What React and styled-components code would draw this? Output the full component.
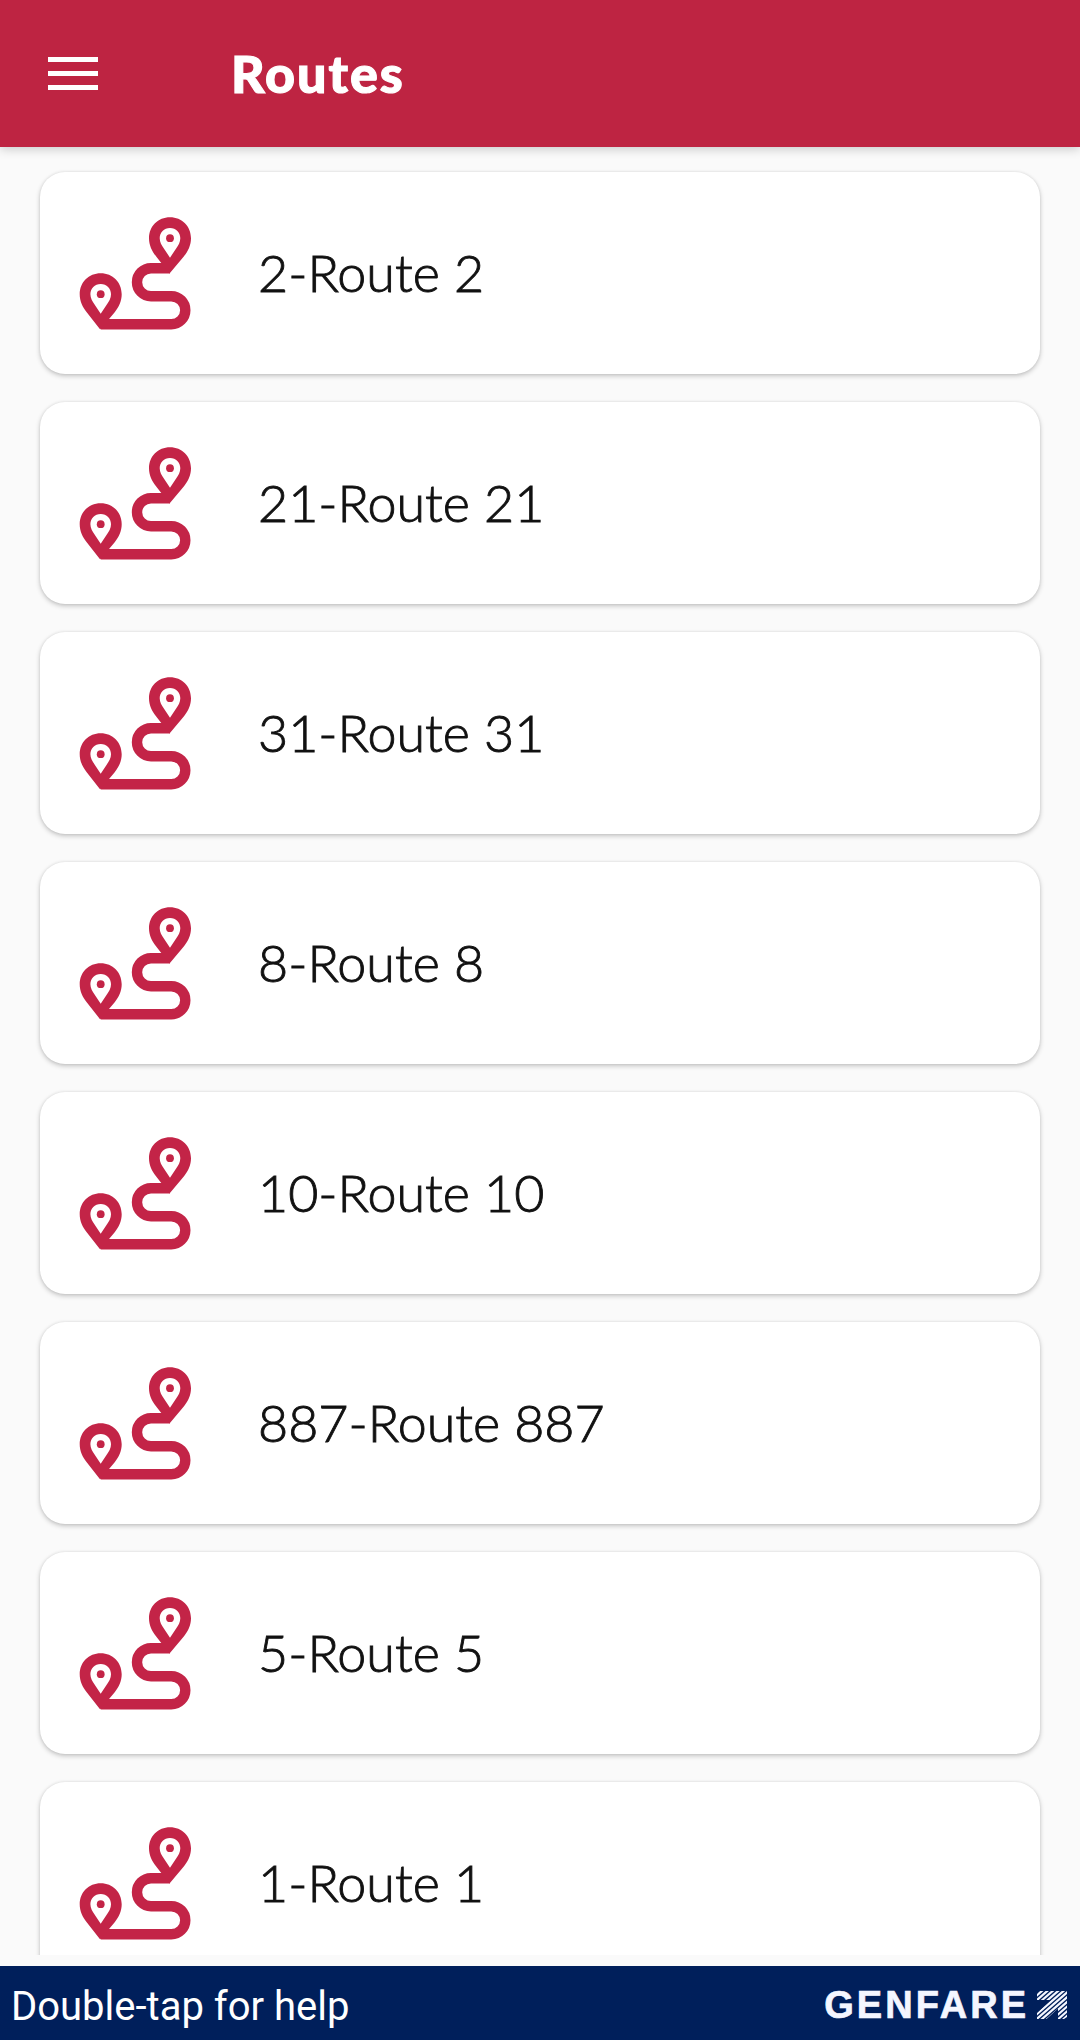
import React from "react";
import styled, { createGlobalStyle } from "styled-components";

const routes = [
    "2-Route 2",
    "21-Route 21",
    "31-Route 31",
    "8-Route 8",
    "10-Route 10",
    "887-Route 887",
    "5-Route 5",
    "1-Route 1",
];

function RouteIcon() {
    return (
        <RouteSvg viewBox="79 215 113 115" aria-hidden="true">
            <path
                d="M170 267.2H151a14 14 0 0 0 0 28H171.3a14 14 0 0 1 0 28H101"
                fill="none"
                stroke="currentColor"
                strokeWidth="10.4"
            />
            <Pin x={170} y={237.2} />
            <Pin x={100.7} y={293.2} />
        </RouteSvg>
    )
}

function Pin({ x, y }) {
    return (
        <g transform={`translate(${x} ${y})`}>
            <path
                d="M0 -21C-12 -21 -21 -12 -21 0C-21 7 -18 13 -14 18L-0.5 35.2L14 18C18 13 21 7 21 0C21 -12 12 -21 0 -21Z"
                fill="currentColor"
            />
            <path
                d="M0 -10.3C-6 -10.3 -10.3 -6 -10.3 0C-10.3 4 -8.3 7 -6.3 10L0 19.5L6.3 10C8.3 7 10.3 4 10.3 0C10.3 -6 6 -10.3 0 -10.3Z"
                fill="#fff"
            />
            <circle r="3.9" fill="currentColor" />
        </g>
    )
}

function BrandArrow() {
    return (
        <ArrowSvg viewBox="0 0 30 28" aria-hidden="true">
            <clipPath id="arrow-shape">
                <path d="M2 0H30V26L27 28H21V17.500L9.500 28H0V22L14 9H0V3Z" />
            </clipPath>
            <path
                clipPath="url(#arrow-shape)"
                d="M-2 6L6 -1M-2 10.700L11.400 -1M-2 15.400L16.800 -1M-2 20.100L22.200 -1M-2 24.800L27.600 -1M-2 29.500L32 -.2M2 30.700L32 4.500M7.400 30.700L32 9.200M12.800 30.700L32 13.900M18.200 30.700L32 18.600M23.600 30.700L32 23.300"
                fill="none"
                stroke="currentColor"
                strokeWidth="2.2"
            />
        </ArrowSvg>
    )
}

function App() {
    return (
        <Screen>
            <GlobalStyle />
            <Header>
                <MenuButton aria-label="Menu">
                    <MenuLine />
                    <MenuLine />
                    <MenuLine />
                </MenuButton>
                <Title>Routes</Title>
            </Header>
            <RouteList>
                {routes.map((route) => (
                    <RouteCard key={route}>
                        <RouteIcon />
                        <RouteName>{route}</RouteName>
                    </RouteCard>
                ))}
            </RouteList>
            <Footer>
                <HelpText>Double-tap for help</HelpText>
                <Brand>
                    <BrandName>GENFARE</BrandName>
                    <BrandArrow />
                </Brand>
            </Footer>
        </Screen>
    )
}

export default App;

const GlobalStyle = createGlobalStyle`
    * {
        box-sizing: border-box;
    }
    body {
        margin: 0;
        background: #fafafa;
    }
`

const Screen = styled.div`
    display: flex;
    flex-direction: column;
    width: 1080px;
    height: 2040px;
    overflow: hidden;
    background: #fafafa;
    font-family: Lato, sans-serif;
`

const Header = styled.header`
    display: flex;
    align-items: center;
    flex: none;
    height: 147px;
    padding-left: 48px;
    color: #fff;
    background: #be2442;
    box-shadow: 0 2px 10px rgba(0, 0, 0, 0.2);
    z-index: 1;
`

const MenuButton = styled.button`
    display: flex;
    flex-direction: column;
    gap: 9px;
    width: 50px;
    margin: 0;
    padding: 0 0 1px;
    border: 0;
    background: none;
`

const MenuLine = styled.span`
    height: 5px;
    background: #fff;
`

const Title = styled.h1`
    margin: 0 0 0 133px;
    padding-bottom: 2px;
    font-size: 52px;
    font-weight: 900;
    line-height: 60px;
    letter-spacing: 2px;
    -webkit-text-stroke: 1.1px #fff;
`

const RouteList = styled.main`
    display: flex;
    flex-direction: column;
    gap: 28px;
    height: 1808px;
    flex: none;
    padding: 25px 40px 0;
    overflow: hidden;
`

const RouteCard = styled.article`
    display: flex;
    align-items: center;
    flex: none;
    height: 202px;
    padding-left: 39px;
    border-radius: 25px;
    background: #fff;
    box-shadow: 0 2px 5px rgba(0, 0, 0, 0.22), 0 0 3px rgba(0, 0, 0, 0.08);
`

const RouteSvg = styled.svg`
    width: 113px;
    height: 115px;
    color: #c32447;
`

const RouteName = styled.span`
    margin-left: 66px;
    padding-bottom: 2px;
    color: #111;
    font-size: 52px;
    font-weight: 300;
    line-height: 64px;
    -webkit-text-stroke: 0.9px #111;
`

const Footer = styled.footer`
    display: flex;
    align-items: center;
    justify-content: space-between;
    height: 74px;
    margin-top: auto;
    padding: 3px 13px 0 11px;
    color: #fff;
    background: #001f5b;
`

const HelpText = styled.span`
    padding-top: 4px;
    font-family: Roboto, sans-serif;
    font-size: 40px;
    line-height: 48px;
`

const Brand = styled.div`
    display: flex;
    align-items: center;
    color: #f4f6ff;
`

const BrandName = styled.span`
    font-family: "Liberation Sans", sans-serif;
    font-size: 38px;
    font-weight: 700;
    line-height: 44px;
    letter-spacing: 3px;
    -webkit-text-stroke: 0.7px #f4f6ff;
`

const ArrowSvg = styled.svg`
    width: 30px;
    height: 28px;
    margin-left: 8px;
`
